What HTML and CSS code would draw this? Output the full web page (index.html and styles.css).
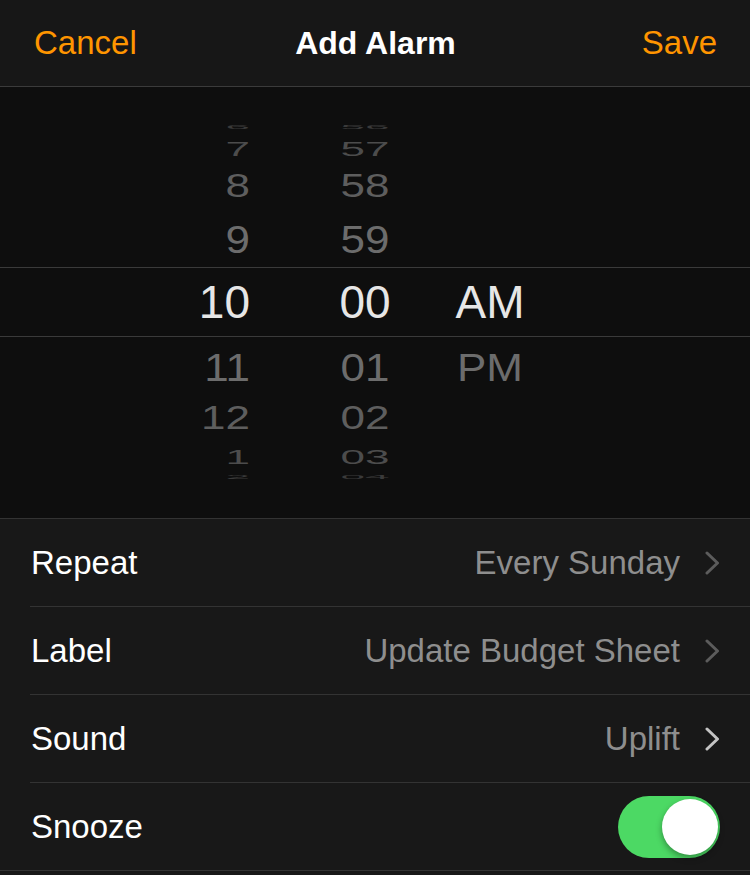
FILE: index.html
```html
<!DOCTYPE html>
<html>

<head>
    <title>Add Alarm</title>
    <link rel="stylesheet" href="styles.css">
</head>

<body>
    <div class="header">
        <span class="nav-btn">Cancel</span>
        <span class="title">Add Alarm</span>
        <span class="nav-btn save">Save</span>
    </div>

    <div class="picker">
        <div class="wheel-row r-tiny-top"><span class="hour"><i class="s1">6</i></span><span class="min"><i class="s1">56</i></span></div>
        <div class="wheel-row r-far-top"><span class="hour"><i class="s2">7</i></span><span class="min"><i class="s2">57</i></span></div>
        <div class="wheel-row r-mid-top"><span class="hour"><i class="s3">8</i></span><span class="min"><i class="s3">58</i></span></div>
        <div class="wheel-row r-near-top"><span class="hour"><i class="s4">9</i></span><span class="min"><i class="s4">59</i></span></div>
        <div class="wheel-row selected"><span class="hour">10</span><span class="min">00</span><span class="ampm">AM</span></div>
        <div class="wheel-row r-near-bottom"><span class="hour"><i class="s4">11</i></span><span class="min"><i class="s4">01</i></span><span class="ampm"><i class="s4">PM</i></span></div>
        <div class="wheel-row r-mid-bottom"><span class="hour"><i class="s3">12</i></span><span class="min"><i class="s3">02</i></span></div>
        <div class="wheel-row r-far-bottom"><span class="hour"><i class="s2">1</i></span><span class="min"><i class="s2">03</i></span></div>
        <div class="wheel-row r-tiny-bottom"><span class="hour"><i class="s1">2</i></span><span class="min"><i class="s1">04</i></span></div>
    </div>

    <div class="list">
        <div class="row">
            <span class="row-label">Repeat</span>
            <span class="row-value">Every Sunday</span>
            <svg class="chevron" width="15" height="24" viewBox="0 0 15 24"><polyline points="2,2 12.5,12 2,22" /></svg>
        </div>
        <div class="row">
            <span class="row-label">Label</span>
            <span class="row-value">Update Budget Sheet</span>
            <svg class="chevron" width="15" height="24" viewBox="0 0 15 24"><polyline points="2,2 12.5,12 2,22" /></svg>
        </div>
        <div class="row">
            <span class="row-label">Sound</span>
            <span class="row-value">Uplift</span>
            <svg class="chevron bright" width="15" height="24" viewBox="0 0 15 24"><polyline points="2,2 12.5,12 2,22" /></svg>
        </div>
        <div class="row last">
            <span class="row-label">Snooze</span>
            <div class="toggle on"><div class="knob"></div></div>
        </div>
    </div>
</body>

</html>
```

FILE: styles.css
```css
body {
    margin: 0;
    background-color: #181818;
    font-family: "Liberation Sans", Arial, sans-serif;
    color: #fff;
}

.header {
    height: 86px;
    display: grid;
    grid-template-columns: 1fr auto 1fr;
    align-items: center;
    padding: 0 33px 0 34px;
    background-color: #171717;
    border-bottom: 1px solid #3b3b3b;
    font-size: 33px;
}

.nav-btn {
    color: #ff9500;
}

.save {
    justify-self: end;
}

.title {
    font-weight: bold;
    font-size: 32px;
}

.picker {
    background-color: #0e0e0e;
    padding: 30px 0 38px;
    border-bottom: 1px solid #333;
}

/* each wheel row is one line of all three wheels */
.wheel-row {
    display: grid;
    grid-template-columns: 250px 50px 130px 120px 1fr;
    grid-template-rows: 100%;
    align-items: center;
    font-size: 44px;
    line-height: 1;
    color: #6c6c6c;
}

.wheel-row .hour {
    grid-column: 1;
    text-align: right;
}

.wheel-row .min {
    grid-column: 3;
    text-align: center;
}

.wheel-row .ampm {
    grid-column: 4;
    text-align: center;
}

.wheel-row i {
    font-style: normal;
    display: inline-block;
}

.s1 { transform: scaleY(0.12); color: #3a3a3a; }
.s2 { transform: scaleY(0.45); color: #4c4c4c; }
.s3 { transform: scaleY(0.74); color: #5e5e5e; }
.s4 { transform: scaleY(0.9); color: #6c6c6c; }

.r-tiny-top { height: 20px; }
.r-far-top { height: 23px; }
.r-mid-top { height: 52px; }
.r-near-top { height: 55px; }
.r-near-bottom { height: 59px; }
.r-mid-bottom { height: 44px; }
.r-far-bottom { height: 34px; }
.r-tiny-bottom { height: 6px; }

.wheel-row.selected {
    height: 68px;
    border-top: 1px solid #3a3a3a;
    border-bottom: 1px solid #3a3a3a;
    font-size: 46px;
    color: #e6e6e6;
}

.list {
    background-color: #181818;
}

.row {
    height: 87px;
    margin-left: 30px;
    padding-right: 30px;
    display: flex;
    align-items: center;
    border-bottom: 1px solid #333;
    font-size: 33px;
}

.row.last {
    margin-left: 0;
    padding-left: 30px;
}

.row-label {
    flex: 1;
    padding-left: 1px;
}

.row-value {
    color: #8e8e8e;
    margin-right: 25px;
}

.chevron polyline {
    fill: none;
    stroke: #5c5c5c;
    stroke-width: 3;
    stroke-linecap: round;
    stroke-linejoin: round;
}

.chevron.bright polyline {
    stroke: #c4c4c4;
}

.toggle {
    width: 102px;
    height: 62px;
    border-radius: 31px;
    background-color: #4cd964;
    display: flex;
    align-items: center;
    justify-content: flex-end;
    padding: 0 2px;
    box-sizing: border-box;
}

.knob {
    width: 56px;
    height: 56px;
    border-radius: 50%;
    background-color: #fff;
    box-shadow: 0px 3px 6px rgba(0, 0, 0, 0.35);
}
```
